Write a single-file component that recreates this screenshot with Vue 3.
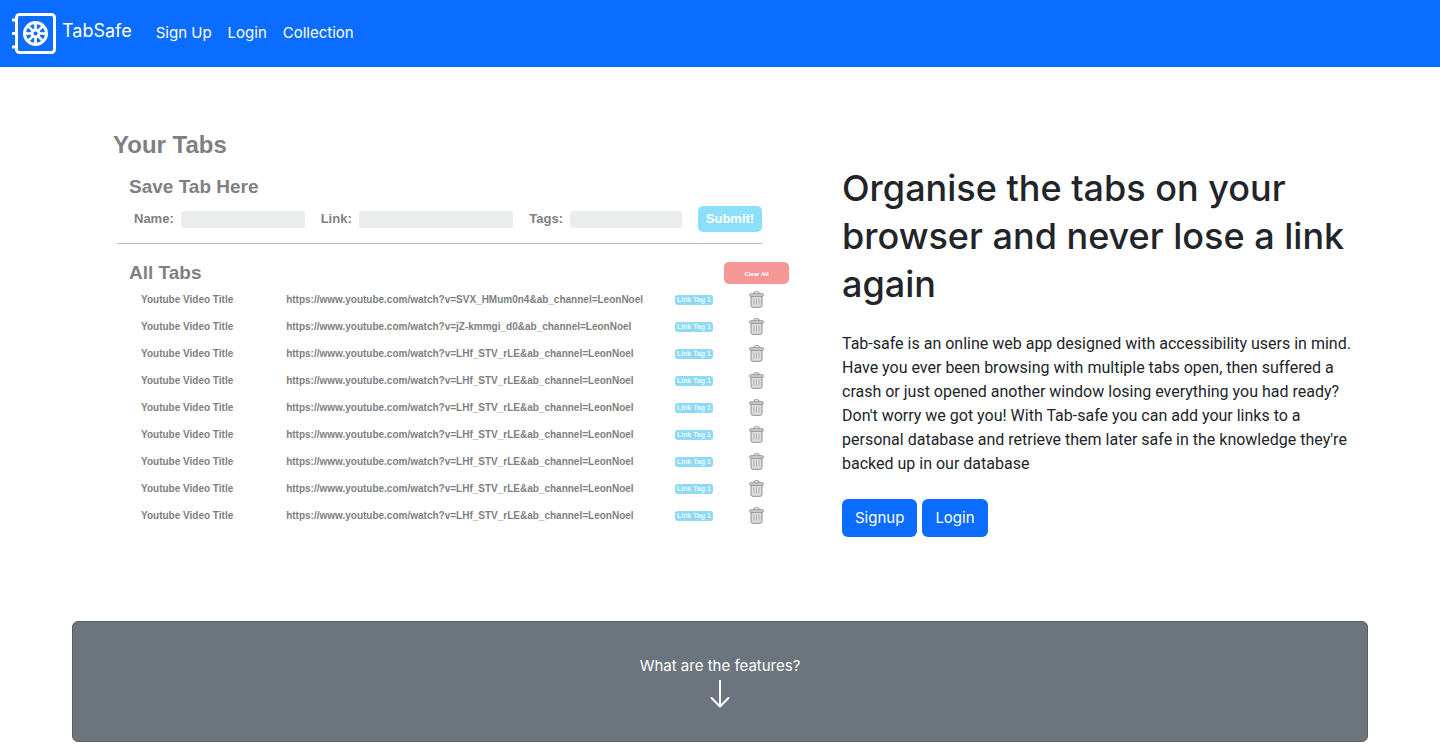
<script setup>
const base = 'https://www.youtube.com/watch?v='
const ids = ['SVX_HMum0n4', 'jZ-kmmgi_d0', ...Array(7).fill('LHf_STV_rLE')]
const tabs = ids.map((id, i) => ({
  key: i,
  title: 'Youtube Video Title',
  url: `${base}${id}&ab_channel=LeonNoel`,
  tag: 'Link Tag 1',
}))
const spokes = [0, 45, 90, 135, 180, 225, 270, 315]
</script>

<template>
  <header class="navbar">
    <a class="brand" href="#">
      <svg class="logo" viewBox="0 0 46 44" fill="none" stroke="#fff" aria-hidden="true">
        <rect x="4.5" y="2.5" width="38" height="38" rx="3" stroke-width="3" />
        <path d="M1 8h3M1 21.500h3M1 35h3" stroke-width="3" stroke-linecap="round" />
        <path d="M7.500 7v30" stroke="#3f5f9c" stroke-width="1" opacity=".6" />
        <circle cx="23.500" cy="21.500" r="11" stroke-width="3" />
        <circle cx="23.500" cy="21.500" r="3.500" stroke-width="2.800" />
        <path
          v-for="a in spokes"
          :key="a"
          d="M23.500 17.500v-6"
          stroke-width="2.600"
          :transform="`rotate(${a} 23.5 21.5)`"
        />
      </svg>
      <span>TabSafe</span>
    </a>
    <nav class="links">
      <a href="#signup">Sign Up</a>
      <a href="#login">Login</a>
      <a href="#collection">Collection</a>
    </nav>
  </header>

  <main class="page">
    <section class="hero">
      <div class="preview">
        <h2>Your Tabs</h2>
        <h3>Save Tab Here</h3>
        <form class="save" @submit.prevent>
          <div class="field name">
            <label for="tab-name">Name:</label>
            <input id="tab-name" type="text" />
          </div>
          <div class="field link">
            <label for="tab-link">Link:</label>
            <input id="tab-link" type="text" />
          </div>
          <div class="field tags">
            <label for="tab-tags">Tags:</label>
            <input id="tab-tags" type="text" />
          </div>
          <button class="submit" type="submit">Submit!</button>
        </form>
        <hr />
        <div class="all">
          <h3>All Tabs</h3>
          <button class="clear" type="button">Clear All</button>
        </div>
        <table>
          <colgroup>
            <col class="c-title" />
            <col class="c-url" />
            <col class="c-tag" />
            <col />
          </colgroup>
          <tbody>
            <tr v-for="tab in tabs" :key="tab.key">
              <td>{{ tab.title }}</td>
              <td><a :href="tab.url">{{ tab.url }}</a></td>
              <td><span class="tag">{{ tab.tag }}</span></td>
              <td>
                <button class="trash" type="button" aria-label="Delete tab">
                  <svg viewBox="0 0 15 17" fill="#dcdcdd" stroke="#8e8e90" aria-hidden="true">
                    <path d="M5 3V1.800q0-1 1-1h3q1 0 1 1V3" fill="none" />
                    <path d="M2 5h11v9.500q0 1.800-1.800 1.800H3.800Q2 16.300 2 14.500z" />
                    <rect x=".7" y="2.800" width="13.600" height="2.400" rx=".8" />
                    <path d="M5 7.500v6M7.500 7.500v6M10 7.500v6" stroke="#b4b4b7" />
                  </svg>
                </button>
              </td>
            </tr>
          </tbody>
        </table>
      </div>

      <div class="copy">
        <h1>Organise the tabs on your browser and never lose a link again</h1>
        <p>
          Tab-safe is an online web app designed with accessibility users in mind. Have you ever
          been browsing with multiple tabs open, then suffered a crash or just opened another
          window losing everything you had ready? Don't worry we got you! With Tab-safe you can add
          your links to a personal database and retrieve them later safe in the knowledge they're
          backed up in our database
        </p>
        <div class="actions">
          <button type="button">Signup</button>
          <button type="button">Login</button>
        </div>
      </div>
    </section>

    <section class="features">
      <p>What are the features?</p>
      <svg viewBox="0 0 20 28" fill="none" stroke="#fff" stroke-width="2" aria-hidden="true">
        <path d="M10 0v26M1.500 18l8.500 8.500 8.500-8.500" stroke-linejoin="round" stroke-linecap="round" />
      </svg>
    </section>
  </main>
</template>

<style>
body {
  background: #fff;
  color: #212529;
  font: 15px/24px Inter, "Liberation Sans", sans-serif;
}
</style>

<style scoped>
h1, h2, h3, p {
  margin: 0;
}
a {
  color: inherit;
  text-decoration: none;
}
button {
  border: 0;
  cursor: pointer;
  font: inherit;
}
.navbar {
  display: flex;
  align-items: center;
  gap: 24px;
  min-height: 67px;
  padding: 0 12px;
  box-sizing: border-box;
  background: #0a6dff;
  color: #fff;
}
.brand {
  display: flex;
  align-items: center;
  gap: 4px;
  font-size: 18px;
}
.brand span {
  padding-bottom: 6px;
}
.logo {
  width: 46px;
  height: 44px;
}
.links {
  display: flex;
  gap: 16px;
  padding-bottom: 2px;
}
.page {
  width: 90%;
  margin: 0 auto;
  padding-bottom: 14px;
}
.hero {
  display: grid;
  grid-template-columns: minmax(0, 730fr) minmax(0, 526fr);
  gap: 40px;
  padding: 64px 0 84px;
}
.preview {
  padding-left: 41px;
  color: #808082;
  font-family: "Liberation Sans", Arial, sans-serif;
  font-weight: 700;
}
.preview h2 {
  font-size: 24px;
  line-height: 28px;
}
.preview h3 {
  font-size: 19px;
  line-height: 24px;
}
.preview > h3 {
  margin: 16px 0 7px 16px;
}
.save {
  display: flex;
  align-items: center;
  gap: 16px;
  margin: 0 40px 0 21px;
  font-size: 13px;
}
.field {
  display: flex;
  align-items: center;
  gap: 7px;
  min-width: 0;
}
.field.name { flex: 171 1 0; }
.field.link { flex: 193 1 0; }
.field.tags { flex: 153 1 0; }
.field input {
  flex: 1;
  min-width: 0;
  height: 17px;
  padding: 0 4px;
  box-sizing: border-box;
  border: 0;
  border-radius: 3px;
  background: #ebedec;
  font: inherit;
  color: inherit;
}
.submit {
  width: 64px;
  height: 26px;
  padding: 0;
  border-radius: 5px;
  background: #8bdff8;
  color: #fff;
}
hr {
  margin: 11px 40px 17px 4px;
  border: 0;
  border-top: 1px solid #bcbcbe;
}
.all {
  display: flex;
  align-items: center;
  justify-content: space-between;
  margin: 0 13px 1px 16px;
}
.clear {
  width: 65px;
  height: 22px;
  padding: 0;
  border-radius: 5px;
  background: #f59797;
  color: #fff;
  font-size: 6px;
}
table {
  width: calc(100% - 41px);
  margin-left: 28px;
  border-collapse: collapse;
  table-layout: fixed;
  font-size: 10px;
  line-height: 12px;
}
.c-title { width: 22.4%; }
.c-url { width: 60%; }
.c-tag { width: 11.4%; }
td {
  height: 27px;
  padding: 0;
  white-space: nowrap;
}
.tag {
  display: block;
  width: 38px;
  height: 10px;
  border-radius: 3px;
  background: #8fd9f2;
  color: #e6faff;
  font-size: 7px;
  line-height: 10px;
  text-align: center;
}
.trash {
  display: block;
  padding: 0;
  background: none;
}
.trash svg {
  display: block;
  width: 15px;
  height: 17px;
}
.copy {
  padding-top: 33px;
}
h1 {
  font-size: 36px;
  line-height: 48px;
  font-weight: 500;
}
.copy p {
  margin: 24px 0 23px;
  padding-right: 6px;
  font-family: Roboto, sans-serif;
  font-size: 16px;
}
.actions {
  display: flex;
  gap: 5px;
}
.actions button {
  height: 38px;
  padding: 0 13px;
  border-radius: 6px;
  background: #0a6dff;
  color: #fff;
}
.features {
  display: flex;
  flex-direction: column;
  align-items: center;
  gap: 2px;
  padding: 32px 16px 33px;
  border: 1px solid #596067;
  border-radius: 6px;
  background: #6c757d;
  color: #fff;
}
.features svg {
  width: 20px;
  height: 28px;
}
</style>
